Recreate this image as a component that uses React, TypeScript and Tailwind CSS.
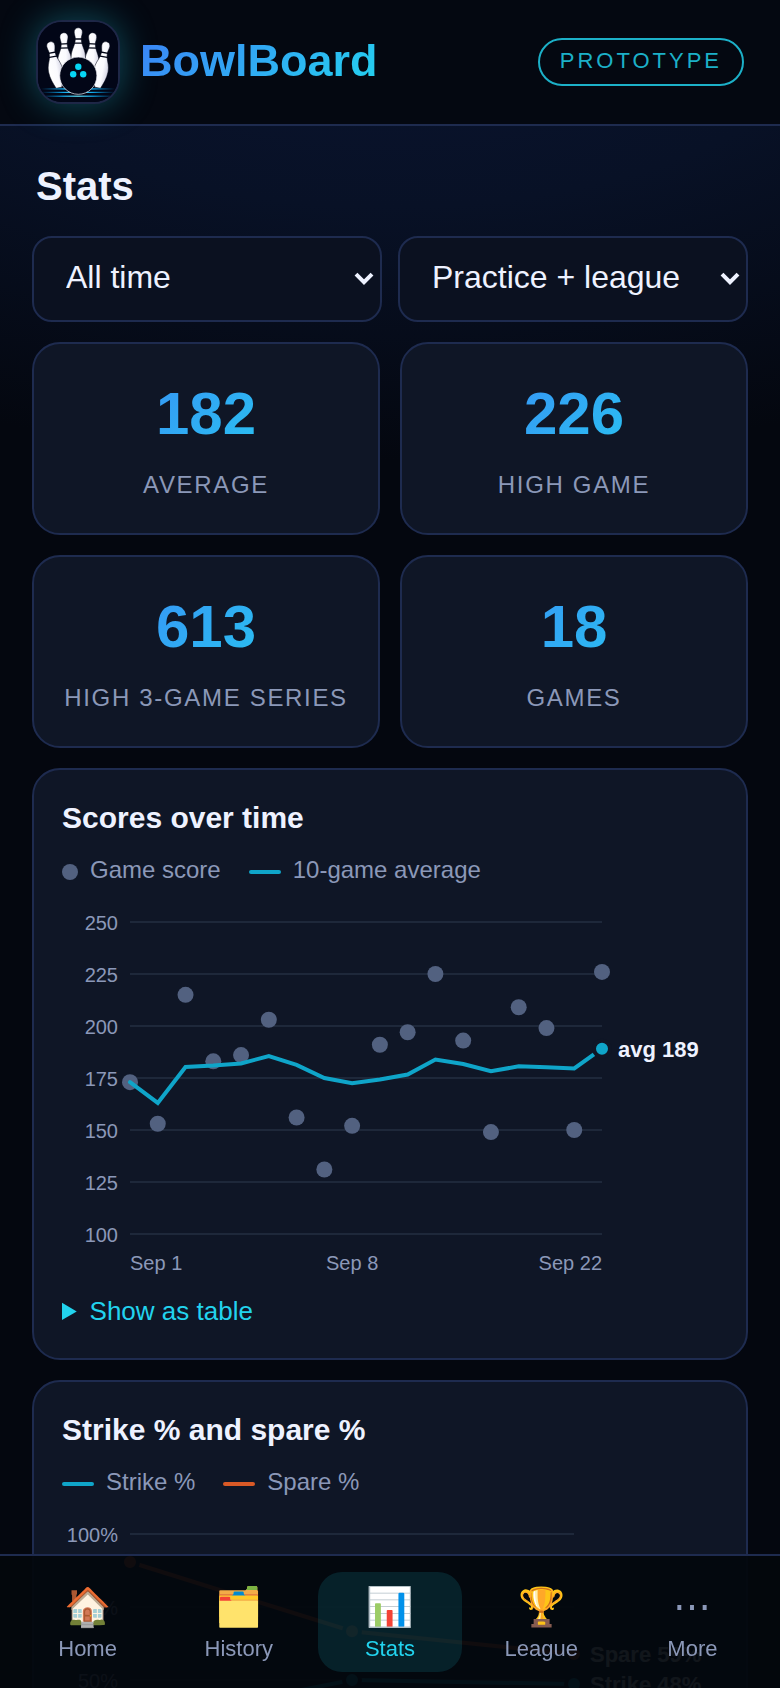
import { useState } from "react";
import clsx from "clsx";

const SCORES = [173, 153, 215, 183, 186, 203, 156, 131, 152, 191, 197, 225, 193, 149, 209, 199, 150, 226];

const STATS = [
  { value: "182", label: "Average" },
  { value: "226", label: "High game" },
  { value: "613", label: "High 3-game series" },
  { value: "18", label: "Games" },
];

const TABS = [
  { icon: "🏠", label: "Home" },
  { icon: "🗂️", label: "History" },
  { icon: "📊", label: "Stats" },
  { icon: "🏆", label: "League" },
  { icon: "⋯", label: "More" },
];

const NIGHTS = [
  { date: "Sep 1", strike: 35, spare: 90.4 },
  { date: "Sep 8", strike: 50, spare: 66.7 },
  { date: "Sep 22", strike: 48.6, spare: 58.9 },
];

// rolling mean over the last 10 games (fewer at the start)
function rollingAverage(scores: number[], size = 10) {
  return scores.map((_, i) => {
    const slice = scores.slice(Math.max(0, i - size + 1), i + 1);
    return slice.reduce((sum, s) => sum + s, 0) / slice.length;
  });
}

const PIN =
  "M0 0c-2.5 0-4.100 1.800-4.100 4.300 0 2.200.9 3.900 1.100 5.700.1 2.200-.2 4.200-.7 6-1 3.800-3.500 7.600-3.500 13.400 0 7 2.500 12.500 4.300 17.500h5.800c1.800-5 4.300-10.500 4.300-17.500 0-5.800-2.500-9.600-3.500-13.400-.5-1.800-.8-3.800-.7-6 .2-1.800 1.100-3.500 1.100-5.700C4.100 1.800 2.500 0 0 0z";

function Pin({ transform }: { transform: string }) {
  return (
    <g transform={transform}>
      <path d={PIN} fill="url(#pin)" stroke="#020617" strokeWidth="0.5" />
      <path d="M-5 11.200h10M-5 15.300h10" stroke="#020617" strokeWidth="1.300" />
    </g>
  );
}

function Logo() {
  return (
    <svg viewBox="0 0 80 80" className="block h-full w-full" aria-hidden="true">
      <defs>
        <linearGradient id="pin" x1="0" x2="1" y1="0" y2="0">
          <stop offset="0" stopColor="#fff" />
          <stop offset="0.6" stopColor="#fafafe" />
          <stop offset="1" stopColor="#d4d4e4" />
        </linearGradient>
        <linearGradient id="lane" gradientUnits="userSpaceOnUse" x1="3" x2="77" y1="0" y2="0">
          <stop offset="0" stopColor="#0284c7" stopOpacity="0" />
          <stop offset="0.3" stopColor="#0ea5e9" />
          <stop offset="0.5" stopColor="#67e8f9" />
          <stop offset="0.7" stopColor="#0ea5e9" />
          <stop offset="1" stopColor="#0284c7" stopOpacity="0" />
        </linearGradient>
      </defs>
      <rect width="80" height="80" fill="#020617" />
      <Pin transform="translate(25.800 10.700) rotate(-2)" />
      <Pin transform="translate(54.800 10.700) rotate(2)" />
      <Pin transform="translate(40.300 5.800)" />
      <Pin transform="translate(12 19.700) rotate(-11)" />
      <Pin transform="translate(68.600 19.700) rotate(11)" />
      <g fill="url(#lane)">
        <rect x="3" y="66.200" width="74" height="1.400" />
        <rect x="2" y="69.800" width="76" height="1.200" />
        <rect x="8" y="73.600" width="64" height="1.200" />
      </g>
      <circle cx="40.300" cy="53.700" r="18.600" fill="#020617" stroke="#f1f1f8" strokeWidth="0.7" />
      <g fill="#06d6f5">
        <circle cx="40.300" cy="44.700" r="3.200" />
        <circle cx="35.200" cy="52.300" r="3.200" />
        <circle cx="45.200" cy="52.300" r="3.200" />
      </g>
    </svg>
  );
}

function FilterSelect({ id, label, options }: { id: string; label: string; options: string[] }) {
  const [value, setValue] = useState(options[0]);
  return (
    <div className="relative">
      <select
        id={id}
        aria-label={label}
        value={value}
        onChange={(e) => setValue(e.target.value)}
        className="block h-[86px] w-full appearance-none rounded-[20px] border-2 border-[#1e2b4f] bg-[#0b1120] pb-1 pl-8 pr-12 text-[32px] leading-10 text-[#eef2ff]"
      >
        {options.map((o) => (
          <option key={o}>{o}</option>
        ))}
      </select>
      <svg viewBox="0 0 20 14" className="pointer-events-none absolute right-2 top-9 h-3.5 w-5" aria-hidden="true">
        <path d="M2 2.200l8 8 8-8" fill="none" stroke="#eef2ff" strokeWidth="4" />
      </svg>
    </div>
  );
}

function LegendItem({ swatch, children }: { swatch: string; children: string }) {
  return (
    <li className="flex items-center gap-3">
      <span className={clsx("mt-1", swatch)} />
      {children}
    </li>
  );
}

function ScoreChart() {
  const x = (i: number) => 68 + (i * 472) / (SCORES.length - 1);
  const y = (v: number) => 336 - (v - 100) * 2.08;
  const averages = rollingAverage(SCORES);
  const last = averages.length - 1;
  return (
    <svg viewBox="0 0 656 382" className="mt-3 block w-full" role="img" aria-label="Scores over time">
      {[250, 225, 200, 175, 150, 125, 100].map((v) => (
        <g key={v}>
          <line x1="68" x2="540" y1={y(v)} y2={y(v)} stroke="#1e283a" strokeWidth="2" />
          <text x="56" y={y(v) + 8} textAnchor="end" fontSize="20" fill="#8b98b8">{v}</text>
        </g>
      ))}
      {SCORES.map((s, i) => (
        <circle key={i} cx={x(i)} cy={y(s)} r="8" fill="#526180" />
      ))}
      <polyline
        points={averages.map((a, i) => `${x(i)},${y(a)}`).join(" ")}
        fill="none"
        stroke="#0fa5c9"
        strokeWidth="4"
        strokeLinecap="round"
      />
      <circle cx={x(last)} cy={y(averages[last])} r="8" fill="#0fa5c9" stroke="#0f1626" strokeWidth="4" />
      <text x="556" y={y(averages[last]) + 8} fontSize="22" fontWeight="700" fill="#eef2ff">
        avg {Math.round(averages[last])}
      </text>
      <g fontSize="20" fill="#8b98b8">
        <text x="68" y="372">Sep 1</text>
        <text x={x(8)} y="372" textAnchor="middle">Sep 8</text>
        <text x="540" y="372" textAnchor="end">Sep 22</text>
      </g>
    </svg>
  );
}

function PercentChart() {
  const x = (i: number) => 68 + i * 222;
  const y = (v: number) => 316 - v * 2.92;
  const series = [
    { key: "spare" as const, color: "#d95926" },
    { key: "strike" as const, color: "#0fa5c9" },
  ];
  return (
    <svg viewBox="0 0 656 362" className="mt-3 block w-full" role="img" aria-label="Strike and spare percentage">
      {[100, 75, 50, 25, 0].map((v) => (
        <g key={v}>
          <line x1="68" x2="512" y1={y(v)} y2={y(v)} stroke="#1e283a" strokeWidth="2" />
          <text x="56" y={y(v) + 8} textAnchor="end" fontSize="20" fill="#8b98b8">{`${v}%`}</text>
        </g>
      ))}
      {series.map((s) => (
        <g key={s.key}>
          <polyline points={NIGHTS.map((n, i) => `${x(i)},${y(n[s.key])}`).join(" ")} fill="none" stroke={s.color} strokeWidth="4" />
          {NIGHTS.map((n, i) => (
            <circle key={n.date} cx={x(i)} cy={y(n[s.key])} r="8" fill={s.color} stroke="#0f1626" strokeWidth="4" />
          ))}
        </g>
      ))}
      <g fontSize="22" fontWeight="700" fill="#eef2ff">
        <text x="528" y="152">Spare 59%</text>
        <text x="528" y="182">Strike 48%</text>
      </g>
      <g fontSize="20" fill="#8b98b8">
        <text x="68" y="352">Sep 1</text>
        <text x="290" y="352" textAnchor="middle">Sep 8</text>
        <text x="512" y="352" textAnchor="end">Sep 22</text>
      </g>
    </svg>
  );
}

const CARD = "rounded-[28px] border-2 border-[#1e2b4f] bg-[#0f1626]";

export default function App() {
  const [tab, setTab] = useState("Stats");

  return (
    <div className="flex h-dvh flex-col overflow-hidden bg-[#04070f] bg-[radial-gradient(ellipse_1000px_460px_at_50%_0px,#0a1430_0%,#081126_45%,#04070f_100%)] bg-no-repeat font-['Liberation_Sans',Arial,sans-serif] text-[#eef2ff]">
      <header className="relative z-10 flex shrink-0 items-center gap-5 border-b-2 border-[#1e2b4f] bg-[#040811] px-9 py-5">
        <div className="size-[84px] shrink-0 overflow-hidden rounded-[26px] border-2 border-[#1e2747] bg-[#020617] shadow-[0_0_36px_rgba(34,211,238,0.35)]">
          <Logo />
        </div>
        <span className="bg-linear-135 from-[#3b82f6] to-[#22d3ee] bg-clip-text pb-0.5 text-[45px] leading-[60px] font-bold text-transparent">
          BowlBoard
        </span>
        <span className="ml-auto rounded-full border-2 border-[#1cb0c8] px-5 pt-[5px] pb-[7px] text-[22px] leading-8 tracking-[3px] text-[#1cb0c8] uppercase">
          Prototype
        </span>
      </header>

      <main className="min-h-0 flex-1 overflow-y-auto px-8 pt-8 pb-40 [scrollbar-width:none]">
        <h1 className="px-1 text-[40px] leading-14 font-bold">Stats</h1>

        <div className="mt-[22px] grid grid-cols-2 gap-4">
          <FilterSelect id="range" label="Time range" options={["All time", "Last 30 days", "Last 7 days"]} />
          <FilterSelect id="kind" label="Game type" options={["Practice + league", "Practice only", "League only"]} />
        </div>

        <div className="mt-5 grid grid-cols-2 gap-5">
          {STATS.map((s) => (
            <div key={s.label} className={clsx(CARD, "px-7 pt-8 pb-[30px] text-center")}>
              <div className="bg-linear-135 from-[#3b82f6] to-[#22d3ee] bg-clip-text text-[60px] leading-[75px] font-bold text-transparent">
                {s.value}
              </div>
              <div className="mt-4 text-2xl leading-9 tracking-[0.07em] whitespace-nowrap text-[#8b98b8] uppercase">
                {s.label}
              </div>
            </div>
          ))}
        </div>

        <section className={clsx(CARD, "mt-5 p-7")}>
          <h2 className="text-[30px] leading-10 font-bold">Scores over time</h2>
          <ul className="mt-4 flex gap-7 text-2xl leading-8 text-[#8b98b8]">
            <LegendItem swatch="size-4 rounded-full bg-[#526180]">Game score</LegendItem>
            <LegendItem swatch="h-1 w-8 rounded-full bg-[#0fa5c9]">10-game average</LegendItem>
          </ul>
          <ScoreChart />
          <details className="mt-3 text-[26px] leading-[38px]">
            <summary className="cursor-pointer text-[#22d3ee]">Show as table</summary>
            <table className="mt-3 w-full text-left text-2xl text-[#8b98b8]">
              <thead>
                <tr>
                  <th>Game</th>
                  <th>Score</th>
                </tr>
              </thead>
              <tbody>
                {SCORES.map((s, i) => (
                  <tr key={i}>
                    <td>{i + 1}</td>
                    <td>{s}</td>
                  </tr>
                ))}
              </tbody>
            </table>
          </details>
        </section>

        <section className={clsx(CARD, "mt-5 p-7")}>
          <h2 className="text-[30px] leading-10 font-bold">Strike % and spare %</h2>
          <ul className="mt-4 flex gap-7 text-2xl leading-8 text-[#8b98b8]">
            <LegendItem swatch="h-1 w-8 rounded-full bg-[#0fa5c9]">Strike %</LegendItem>
            <LegendItem swatch="h-1 w-8 rounded-full bg-[#d95926]">Spare %</LegendItem>
          </ul>
          <PercentChart />
        </section>
      </main>

      <nav className="fixed inset-x-0 bottom-0 grid grid-cols-5 gap-2 border-t-2 border-[#1e2b4f] bg-[#03070d]/94 p-4">
        {TABS.map((t) => (
          <button
            key={t.label}
            type="button"
            onClick={() => setTab(t.label)}
            className={clsx(
              "flex h-[100px] flex-col items-center justify-center gap-1 rounded-3xl pt-1.5 text-[22px]",
              tab === t.label ? "bg-[#22d3ee]/12 text-[#22d3ee]" : "text-[#8b98b8]"
            )}
          >
            <span className="text-[38px] leading-[44px]">{t.icon}</span>
            <span className="leading-8">{t.label}</span>
          </button>
        ))}
      </nav>
    </div>
  );
}
